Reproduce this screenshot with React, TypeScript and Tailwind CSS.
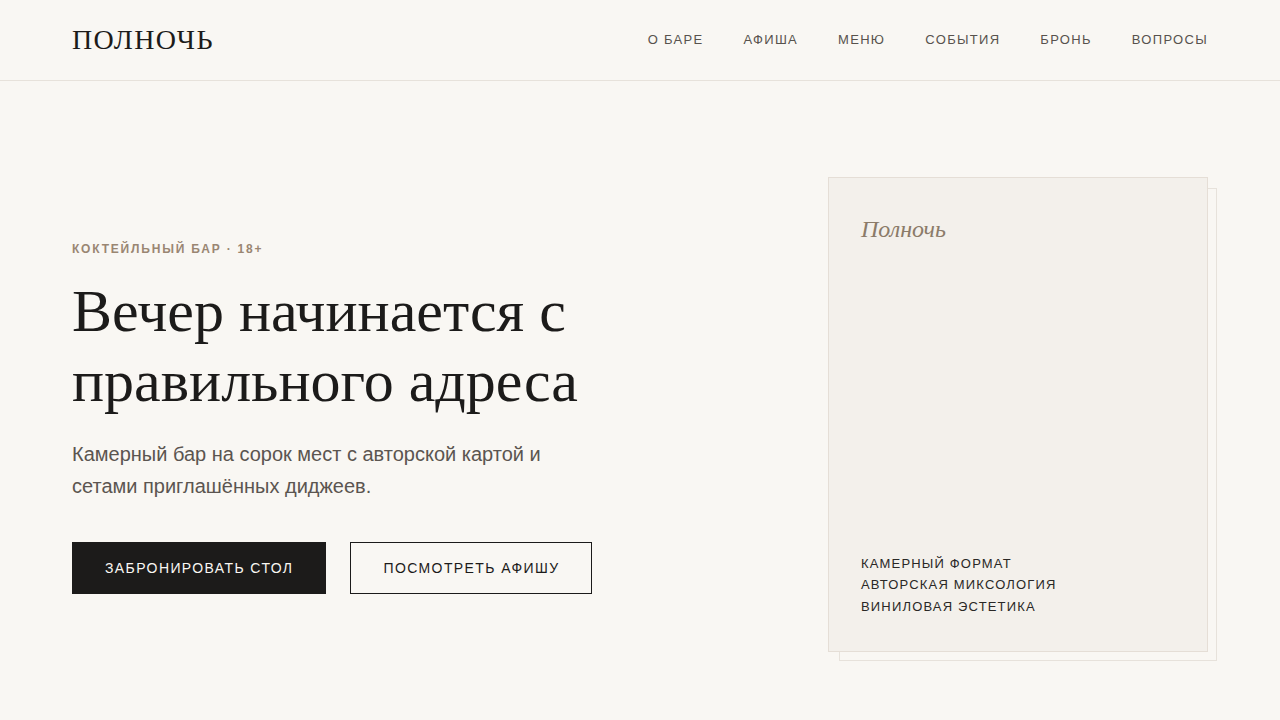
const navItems = ["О баре", "Афиша", "Меню", "События", "Бронь", "Вопросы"];

const features = ["Камерный формат", "Авторская миксология", "Виниловая эстетика"];

export default function App() {
  return (
    <div className="min-h-screen bg-[#f9f7f3] text-[#1c1b1a] font-['Liberation_Sans',Arial,sans-serif]">
      <header className="h-[81px] border-b border-[#e7e2db]">
        <div className="mx-auto flex h-full max-w-[1280px] items-center justify-between px-[72px]">
          <a className="font-['Liberation_Serif','Times_New_Roman',serif] text-[28px] tracking-[0.05em] text-[#1c1b1a]">
            ПОЛНОЧЬ
          </a>
          <nav className="flex items-center gap-10">
            {navItems.map((item) => (
              <a key={item} className="text-[13px] uppercase tracking-[0.1em] text-[#57524d]">
                {item}
              </a>
            ))}
          </nav>
        </div>
      </header>

      <main className="mx-auto grid max-w-[1280px] grid-cols-[1fr_380px] items-start gap-10 px-[72px] pt-[96px] pb-16">
        <section className="mt-[64px]">
          <p className="text-xs font-bold uppercase tracking-[0.15em] text-[#9a8672]">
            Коктейльный бар · 18+
          </p>
          <h1 className="mt-[19px] max-w-[600px] font-['Liberation_Serif','Times_New_Roman',serif] text-[60px] leading-[70px] font-normal">
            Вечер начинается с правильного адреса
          </h1>
          <p className="mt-[22px] max-w-[500px] text-[20px] leading-8 text-[#5b5550]">
            Камерный бар на сорок мест с авторской картой и сетами приглашённых диджеев.
          </p>
          <div className="mt-10 flex gap-6">
            <button
              type="button"
              className="h-[52px] border border-[#1c1b1a] bg-[#1c1b1a] px-8 text-sm uppercase tracking-[0.1em] text-[#f9f7f3]"
            >
              Забронировать стол
            </button>
            <button
              type="button"
              className="h-[52px] border border-[#1c1b1a] px-8 text-sm uppercase tracking-[0.1em] text-[#1c1b1a]"
            >
              Посмотреть афишу
            </button>
          </div>
        </section>

        <aside className="relative">
          <div className="absolute top-[11px] left-[11px] -right-[9px] -bottom-[9px] border border-[#e7e2db]" />
          <div className="relative flex h-[475px] flex-col justify-between border border-[#e5ded6] bg-[#f3f0eb] px-8 pt-[35px] pb-[36px]">
            <p className="font-['Liberation_Serif','Times_New_Roman',serif] text-2xl italic text-[#8b7b69]">
              Полночь
            </p>
            <ul className="space-y-[4px] text-[13px] leading-[17.5px] uppercase tracking-[0.09em] text-[#2a2826]">
              {features.map((f) => (
                <li key={f}>{f}</li>
              ))}
            </ul>
          </div>
        </aside>
      </main>
    </div>
  );
}
